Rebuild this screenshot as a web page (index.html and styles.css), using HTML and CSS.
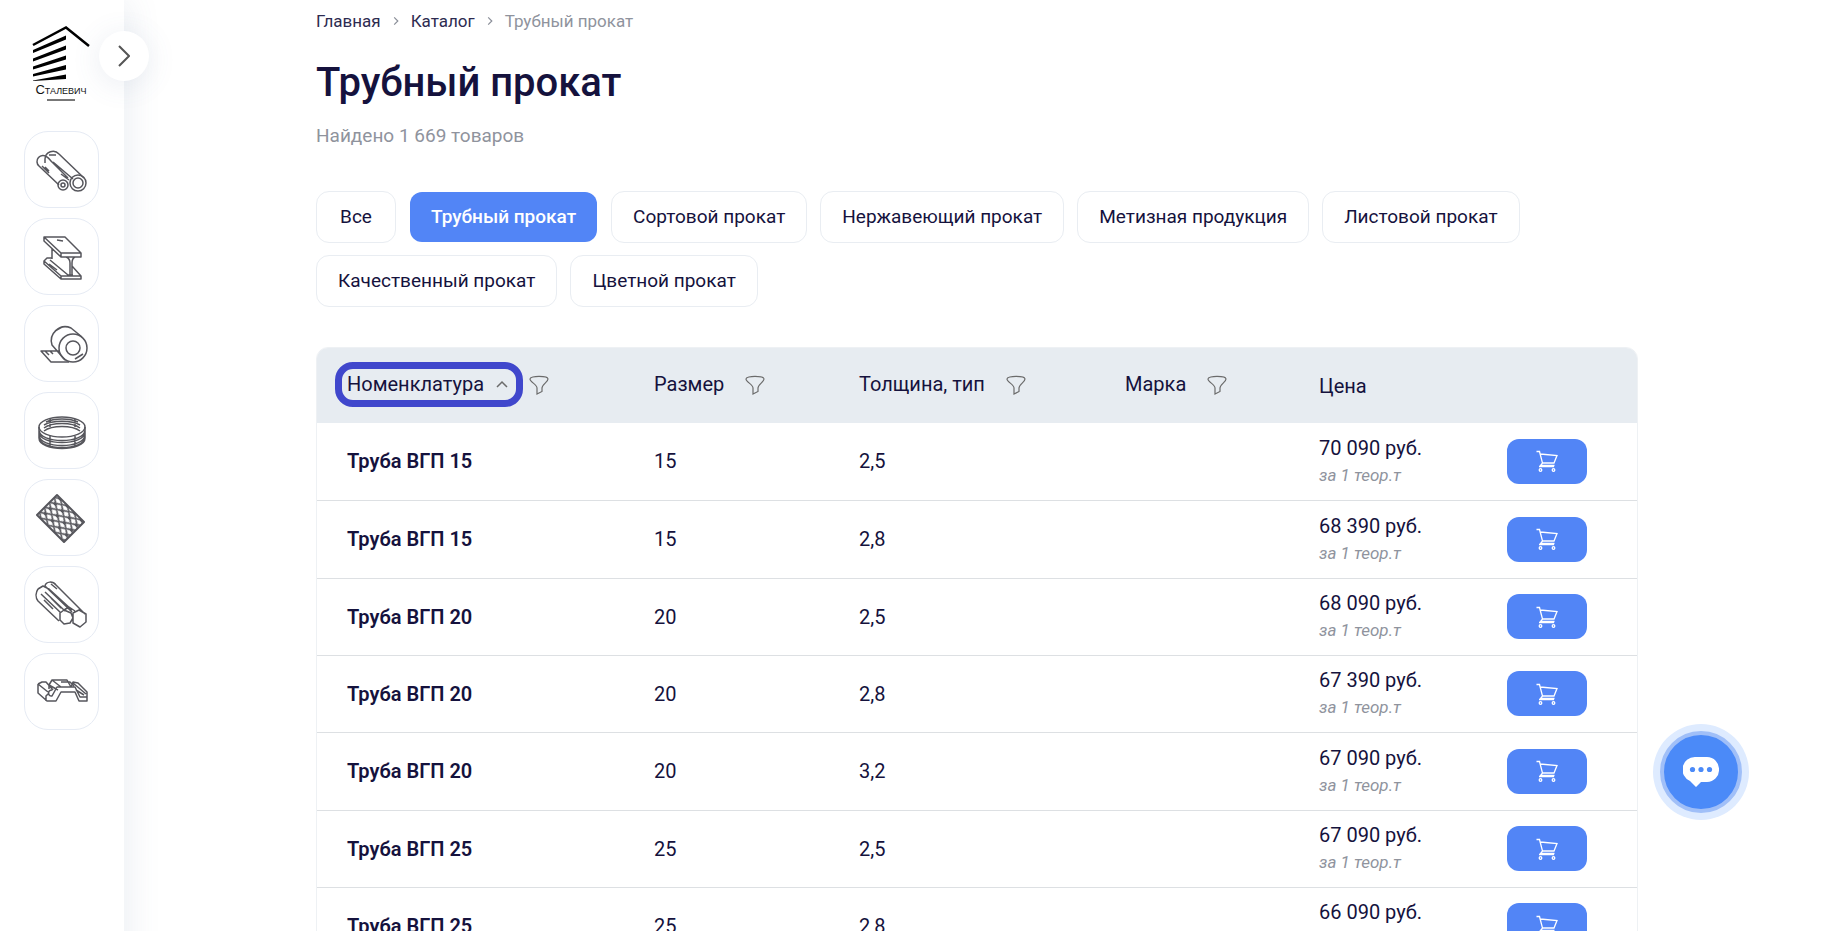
FILE: index.html
```html
<!DOCTYPE html>
<html lang="ru">
<head>
<meta charset="utf-8">
<title>Трубный прокат</title>
<link rel="stylesheet" href="styles.css">
</head>
<body>
<svg class="defs" aria-hidden="true">
  <symbol id="funnel" viewBox="0 0 20 20"><path d="M1 4C1 .5 19 .5 19 4c0 3-6 5.500-6 9v3.500L8 19v-6C8 9.500 1 7 1 4z"/></symbol>
  <symbol id="cart" viewBox="0 0 22 22"><path d="M.5 1.500h3l3 11.500-2 2.500h14M4.300 4l16.700 1.500-3 7.500H6.500M3 16.500h15"/><circle cx="4.500" cy="20" r="1.300"/><circle cx="17.500" cy="20" r="1.300"/></symbol>
  <pattern id="mesh" width="10" height="7" patternUnits="userSpaceOnUse" patternTransform="translate(22 4) rotate(45)"><path d="M0 3.500 5 0l5 3.500L5 7z" fill="none" stroke="#56565c" stroke-width="1.700"/></pattern>
</svg>
<div class="layout">
  <aside class="sidebar">
    <a class="logo" href="#" aria-label="Сталевич">
      <svg class="logo-mark" viewBox="0 0 58 56">
        <path d="M1 19 34 1.500 57 20" fill="none" stroke="#000" stroke-width="2.500"/>
        <path d="M1 24 34 9.500v4L1 27zM1 32.500l33-13v4L1 35.500zM1 40.500l33-11v4L1 43.500zM1 48l33-9v4.500L1 50.500zM1 54.500l33-6v4.500l-33 2z"/>
      </svg>
      <span class="logo-name">Сталевич</span>
      <span class="logo-line"></span>
    </a>
    <button class="toggle" aria-label="Открыть меню"><svg viewBox="0 0 12 22"><path d="m1 1 10 10L1 21"/></svg></button>
    <nav class="cats">
      <a href="#" aria-label="Трубный прокат"><svg viewBox="0 0 54 54"><path d="M10 20v-4a8 8 0 0 1 14-5l25 24M18 19l20 17M24 42 4 23a6 6 0 0 1 8-9c2 1 3 3 5 5l16 16M7 23l7 7M14 12h7M26 31l8 6M10 24l4 4"/><circle cx="43" cy="40" r="8"/><circle cx="43" cy="40" r="5"/><circle cx="28" cy="42" r="5"/><circle cx="28" cy="42" r="2"/></svg></a>
      <a href="#" aria-label="Сортовой прокат"><svg viewBox="0 0 54 54"><path d="M9 7h21l16 16v4H26L9 11zM9 7l17 16h20M26 23v4M31 27c3 1 4 3 4 6v12M40 27c-2 1-3 3-3 6v12M17 18v11M17 28h-5l-3 3v3l17 15h20v-3H26L9 31M26 46v3M37 36l9 10M22 10l6 1M15 30l18 15h5M14 34l8 6"/></svg></a>
      <a href="#" aria-label="Листовой прокат"><svg viewBox="0 0 54 54"><path d="M47 20 36 11A14 14 0 0 0 17 28l13 15M34 45H16L6 34h19M10 34l4 4M15 34l3 3M20 14l7-4M40 42l8-5"/><circle cx="38" cy="31" r="14"/><circle cx="38" cy="31" r="7"/></svg></a>
      <a href="#" aria-label="Проволока"><svg viewBox="0 0 54 54"><ellipse cx="27" cy="23" rx="23" ry="10"/><path d="M4 23v11c0 14 46 14 46 0V23M4 26c0 14 46 14 46 0M4 28c0 14 46 14 46 0M4 31c0 14 46 14 46 0M4 33c0 14 46 14 46 0M11 18c8-4 24-4 32 0M9 21c8-5 28-5 36 0M9 24c8-6 28-6 36 0M9 27c8-6 28-6 36 0M15 15v8M40 15v8M15 32v10M40 32v10"/></svg></a>
      <a href="#" aria-label="Сетка"><svg viewBox="0 0 54 54"><path fill="url(#mesh)" stroke-width="2" d="m22 4 27 27-20 20L2 24z"/></svg></a>
      <a href="#" aria-label="Качественный прокат"><svg viewBox="0 0 54 54"><path d="M10 8c1-5 8-5 11-1l29 29M10 8l27 26M3 11l5-3 6 3 23 21M24 43 3 23c-3-4-2-9 0-12M10 14l20 19M6 16l20 19M16 6l6 5M9 22l9 9M16 20l10 10M38 35l6-3 7 4v8l-6 5-7-4zM25 35l4-3 7 3 2 5-3 5-6 1-4-4zM29 32l5-3 6 4"/></svg></a>
      <a href="#" aria-label="Метизная продукция"><svg viewBox="0 0 54 54"><path d="M3 19l4-2h4l7 8M3 19v9l9 8h9l5-9h14l4 9h8v-9l-9-9-5-1-2 5-4-7H17l-3 5v4M3 19l10 8M11 36v-5l3-3M17 25c-5 0-4 7 0 6l5-9h17M14 20l9 5M17 15l9 7M22 22h18l5 10h7M26 17h9l4 4M38 18l13 11M41 25l8 5"/></svg></a>
    </nav>
  </aside>
  <main class="main">
    <nav class="crumbs"><a href="#">Главная</a><svg viewBox="0 0 5 8"><path d="m1 1 3 3-3 3"/></svg><a href="#">Каталог</a><svg viewBox="0 0 5 8"><path d="m1 1 3 3-3 3"/></svg><span>Трубный прокат</span></nav>
    <h1>Трубный прокат</h1>
    <p class="found">Найдено 1 669 товаров</p>
    <div class="chips">
      <button>Все</button><button class="active">Трубный прокат</button><button>Сортовой прокат</button><button>Нержавеющий прокат</button><button>Метизная продукция</button><button>Листовой прокат</button><button>Качественный прокат</button><button>Цветной прокат</button>
    </div>
    <div class="table-box">
      <table>
        <colgroup><col class="c-name"><col class="c-size"><col class="c-type"><col class="c-mark"><col class="c-price"><col class="c-buy"></colgroup>
        <thead><tr>
          <th><div class="head"><button class="sort">Номенклатура<svg viewBox="0 0 12 8"><path d="m1 7 5-5 5 5"/></svg></button><button class="filter" aria-label="Фильтр: номенклатура"><svg><use href="#funnel"/></svg></button></div></th>
          <th><div class="head">Размер<button class="filter" aria-label="Фильтр: размер"><svg><use href="#funnel"/></svg></button></div></th>
          <th><div class="head">Толщина, тип<button class="filter" aria-label="Фильтр: толщина, тип"><svg><use href="#funnel"/></svg></button></div></th>
          <th><div class="head">Марка<button class="filter" aria-label="Фильтр: марка"><svg><use href="#funnel"/></svg></button></div></th>
          <th>Цена</th><th></th>
        </tr></thead>
        <tbody>
          <tr><td><a href="#">Труба ВГП 15</a></td><td>15</td><td>2,5</td><td></td><td>70 090 руб.<em>за 1 теор.т</em></td><td><button class="buy" aria-label="В корзину"><svg><use href="#cart"/></svg></button></td></tr>
          <tr><td><a href="#">Труба ВГП 15</a></td><td>15</td><td>2,8</td><td></td><td>68 390 руб.<em>за 1 теор.т</em></td><td><button class="buy" aria-label="В корзину"><svg><use href="#cart"/></svg></button></td></tr>
          <tr><td><a href="#">Труба ВГП 20</a></td><td>20</td><td>2,5</td><td></td><td>68 090 руб.<em>за 1 теор.т</em></td><td><button class="buy" aria-label="В корзину"><svg><use href="#cart"/></svg></button></td></tr>
          <tr><td><a href="#">Труба ВГП 20</a></td><td>20</td><td>2,8</td><td></td><td>67 390 руб.<em>за 1 теор.т</em></td><td><button class="buy" aria-label="В корзину"><svg><use href="#cart"/></svg></button></td></tr>
          <tr><td><a href="#">Труба ВГП 20</a></td><td>20</td><td>3,2</td><td></td><td>67 090 руб.<em>за 1 теор.т</em></td><td><button class="buy" aria-label="В корзину"><svg><use href="#cart"/></svg></button></td></tr>
          <tr><td><a href="#">Труба ВГП 25</a></td><td>25</td><td>2,5</td><td></td><td>67 090 руб.<em>за 1 теор.т</em></td><td><button class="buy" aria-label="В корзину"><svg><use href="#cart"/></svg></button></td></tr>
          <tr><td><a href="#">Труба ВГП 25</a></td><td>25</td><td>2,8</td><td></td><td>66 090 руб.<em>за 1 теор.т</em></td><td><button class="buy" aria-label="В корзину"><svg><use href="#cart"/></svg></button></td></tr>
        </tbody>
      </table>
    </div>
  </main>
</div>
<button class="chat" aria-label="Чат"><svg viewBox="0 0 36 32"><path fill="#fff" d="M12 1h12a12 12 0 0 1 12 12.500A12 12 0 0 1 24 26h-6l-5 5-6-6A12.500 12.500 0 0 1 12 1z"/><g fill="#4b8af8"><circle cx="9.500" cy="13.500" r="2.600"/><circle cx="18" cy="13.500" r="2.600"/><circle cx="26.500" cy="13.500" r="2.600"/></g></svg></button>
</body>
</html>
```
FILE: styles.css
```css
* { box-sizing: border-box; }
html { scrollbar-width: none; }
body { margin: 0; background: #fff; color: #15123d; font-family: Roboto, "Noto Sans", sans-serif; font-size: 20px; line-height: 24px; }
a { color: inherit; text-decoration: none; }
button { font: inherit; color: inherit; background: none; border: 0; padding: 0; cursor: pointer; }
svg { display: block; fill: none; stroke: #6b6b6b; }
.defs { position: absolute; width: 0; height: 0; }
.layout { display: flex; align-items: stretch; min-height: 100vh; }
.sidebar { position: relative; flex: 0 0 124px; padding: 26px 25px 0 24px; box-shadow: 6px 0 30px rgba(80, 105, 145, .1); }
.logo { display: flex; flex-direction: column; align-items: center; width: 58px; margin-left: 8px; color: #111; }
.logo-mark { width: 58px; height: 56px; fill: #000; stroke: none; }
.logo-name { font-family: "Liberation Sans", sans-serif; font-size: 13px; line-height: 16px; font-variant: small-caps; }
.logo-line { width: 28px; height: 2px; margin-top: 1px; background: #777; }
.toggle { position: absolute; top: 31px; right: -25px; width: 50px; height: 50px; border-radius: 50%; background: #fff; box-shadow: 0 4px 30px rgba(80, 105, 145, .12); display: grid; place-items: center; }
.toggle svg { width: 12px; height: 22px; stroke: #555; stroke-width: 2; }
.cats { display: flex; flex-direction: column; gap: 10px; margin-top: 30px; }
.cats a { display: grid; place-items: center; height: 77px; border: 1px solid #e6ebf4; border-radius: 24px; }
.cats svg { width: 54px; height: 54px; stroke: #56565c; stroke-width: 1.500; stroke-linejoin: round; }
.main { flex: 1; min-width: 0; padding: 9px 196px 0 192px; }
.crumbs { display: flex; align-items: center; gap: 12px; font-size: 17px; line-height: 24px; color: #2d2b50; }
.crumbs svg { width: 6px; height: 10px; stroke: #8b8f99; }
.crumbs span { color: #8f939d; }
h1 { margin: 26px 0 0; font-size: 40px; line-height: 48px; font-weight: 500; }
.found { margin: 17px 0 0; color: #8f939d; font-size: 19px; line-height: 24px; }
.chips { display: flex; flex-wrap: wrap; gap: 12px 13px; margin-top: 43px; font-size: 19px; }
.chips button { min-width: 80px; height: 52px; padding: 0 21px; border: 1px solid #e9edf2; border-radius: 13px; }
.chips .active { background: #5285f6; border-color: transparent; background-clip: padding-box; color: #fff; font-weight: 500; }
.table-box { margin-top: 40px; border: 1px solid #eef1f4; border-radius: 12px; overflow: hidden; }
table { width: 100%; table-layout: fixed; border-collapse: collapse; }
.c-name { width: 307px; }
.c-size { width: 205px; }
.c-type { width: 266px; }
.c-mark { width: 194px; }
.c-price { width: 188px; }
.c-buy { width: 160px; }
th { height: 75px; padding: 0 0 0 30px; background: #e7ecf1; text-align: left; font-weight: 400; vertical-align: middle; }
.head { display: flex; align-items: center; padding-bottom: 4px; }
.sort { position: relative; display: flex; align-items: center; gap: 12px; }
.sort svg { width: 12px; height: 8px; stroke-width: 1.500; }
.sort::after { content: ""; position: absolute; inset: -10px -15px -11px -12px; border: 7px solid #4047cc; border-radius: 18px; }
.filter { margin-left: 21px; padding-top: 2px; }
.filter svg { width: 20px; height: 20px; stroke-width: 1.200; }
td { height: 77px; padding: 0 0 0 30px; border-bottom: 1px solid #dde0e3; }
tr:nth-child(3n+2) td { height: 78px; }
td a { font-weight: 600; }
td em { display: block; margin-top: 3px; font-size: 17px; color: #8f939d; }
.buy { display: grid; place-items: center; width: 80px; height: 45px; border-radius: 12px; background: #5285f6; }
.buy svg { width: 22px; height: 22px; stroke: #fff; stroke-width: 1.300; }
.chat { position: fixed; right: 92px; bottom: 118px; width: 82px; height: 82px; display: grid; place-items: center; border: 4px solid #a0bff8; border-radius: 50%; background: #4b8af8; box-shadow: 0 0 0 7px #deebff; }
.chat svg { width: 36px; height: 32px; stroke: none; }
```
